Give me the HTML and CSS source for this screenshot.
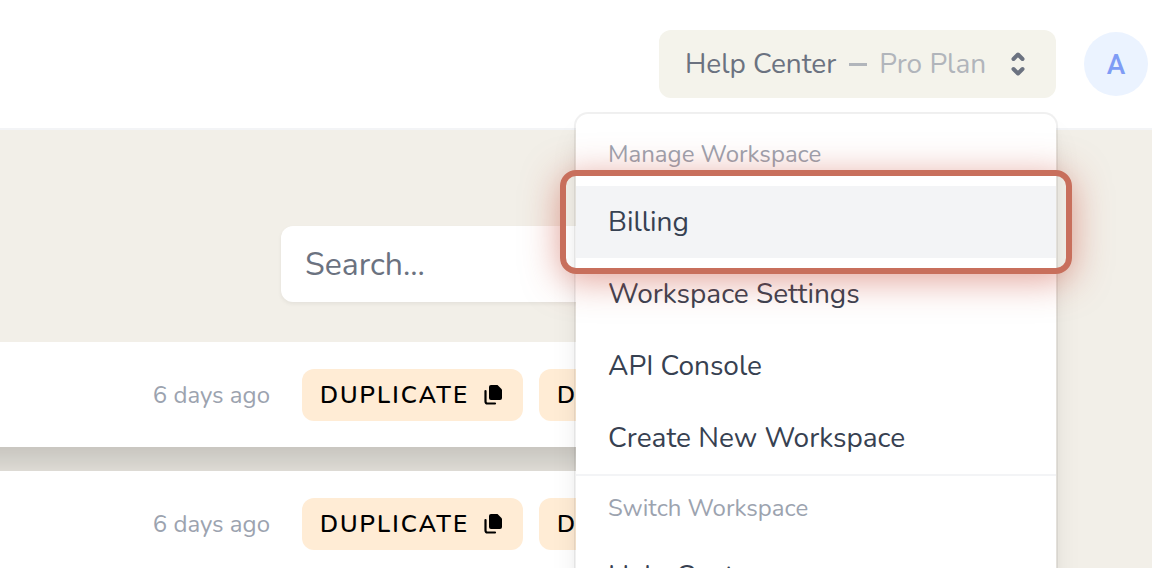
FILE: index.html
```
<!DOCTYPE html>
<html lang="en">
<head>
  <meta charset="UTF-8" />
  <meta name="viewport" content="width=device-width, initial-scale=1.0" />
  <title>Help Center</title>
  <link rel="stylesheet" href="styles.css">
</head>
<body>
  <svg class="sprite" aria-hidden="true">
    <symbol id="icon-copy" viewBox="0 0 20 22">
      <path d="M8 1h6.500l4.500 4.500V14a2 2 0 0 1-2 2H8a2 2 0 0 1-2-2V3a2 2 0 0 1 2-2z" fill="currentColor" />
      <path d="M2.500 7v10.500a2 2 0 0 0 2 2H12" fill="none" stroke="currentColor" stroke-width="2.200" stroke-linecap="round" />
    </symbol>
  </svg>

  <header class="topbar">
    <div class="switcher">
      <button class="switcher-btn" type="button" aria-haspopup="true" aria-expanded="true">
        <span>Help Center</span>
        <span class="dash"></span>
        <span class="plan">Pro Plan</span>
        <svg class="chevrons" viewBox="0 0 16 24" aria-hidden="true">
          <path d="M3.500 7L8 2.500 12.500 7M3.500 17L8 21.500 12.500 17" />
        </svg>
      </button>

      <nav class="menu">
        <div class="menu-label">Manage Workspace</div>
        <a class="menu-item active" href="#billing">Billing</a>
        <a class="menu-item" href="#settings">Workspace Settings</a>
        <a class="menu-item" href="#api">API Console</a>
        <a class="menu-item" href="#new">Create New Workspace</a>
        <hr class="menu-line">
        <div class="menu-label">Switch Workspace</div>
        <a class="menu-item" href="#help-center">Help Center</a>
      </nav>
    </div>
    <button class="avatar" type="button">A</button>
  </header>

  <main class="content">
    <input class="search" type="search" placeholder="Search..." aria-label="Search">

    <div class="cards">
      <article class="card raised">
        <span class="date">6 days ago</span>
        <button class="btn" type="button">Duplicate <svg class="icon"><use href="#icon-copy" /></svg></button>
        <button class="btn btn-delete" type="button">Delete</button>
      </article>
      <article class="card">
        <span class="date">6 days ago</span>
        <button class="btn" type="button">Duplicate <svg class="icon"><use href="#icon-copy" /></svg></button>
        <button class="btn btn-delete" type="button">Delete</button>
      </article>
    </div>
  </main>
</body>
</html>
```

FILE: styles.css
```
* {
  box-sizing: border-box;
}

body {
  margin: 0;
  min-height: 100vh;
  background: #f2efe8;
  font-family: Nunito, Lato, sans-serif;
  font-size: 28px;
  color: #374151;
  overflow: hidden;
}

button,
input {
  font-family: inherit;
}

.sprite {
  display: none;
}

/* top bar */
.topbar {
  display: flex;
  justify-content: flex-end;
  align-items: center;
  gap: 28px;
  height: 130px;
  padding: 0 4px 0 24px;
  background: #ffffff;
  border-bottom: 2px solid #f3f4f6;
}

.switcher {
  position: relative;
}

.switcher-btn {
  display: flex;
  align-items: center;
  min-width: 397px;
  height: 68px;
  padding: 0 30px 0 26px;
  border: none;
  border-radius: 12px;
  background: #f4f3eb;
  color: #6b7280;
  font-size: 28px;
  cursor: pointer;
}

.dash {
  width: 18px;
  height: 3px;
  margin: 0 12px 0 13px;
  background: #b1b5bb;
}

.plan {
  color: #b1b5bb;
}

.chevrons {
  width: 16px;
  height: 24px;
  margin-left: auto;
  fill: none;
  stroke: #6b7280;
  stroke-width: 4;
  stroke-linecap: round;
  stroke-linejoin: round;
}

.avatar {
  width: 64px;
  height: 64px;
  padding: 0;
  border: none;
  border-radius: 50%;
  background: #ebf3ff;
  color: #7f9cf5;
  font-family: Roboto, sans-serif;
  font-size: 28px;
  font-weight: 500;
  cursor: pointer;
}

/* workspace menu */
.menu {
  position: absolute;
  top: 82px;
  right: -2px;
  z-index: 10;
  width: 484px;
  padding: 8px 0;
  background: #ffffff;
  background-clip: padding-box;
  border: 2px solid rgba(0, 0, 0, 0.06);
  border-radius: 14px;
  box-shadow: 0 20px 30px -6px rgba(0, 0, 0, 0.1), 0 8px 12px -4px rgba(0, 0, 0, 0.05);
}

.menu-label,
.menu-item {
  display: flex;
  align-items: center;
  padding: 0 32px;
}

.menu-label {
  height: 64px;
  color: #9ca3af;
  font-size: 24px;
}

.menu-item {
  height: 72px;
  color: #374151;
  text-decoration: none;
}

.menu-item.active {
  position: relative;
  background: #f3f4f6;
}

.menu-item.active::after {
  content: "";
  position: absolute;
  inset: -16px;
  border: 6px solid #c86f5c;
  border-radius: 16px;
  box-shadow: 0 6px 36px rgba(200, 70, 50, 0.5);
  pointer-events: none;
}

.menu-line {
  height: 2px;
  margin: 0;
  border: none;
  background: #f3f4f6;
}

/* content */
.content {
  display: flex;
  flex-direction: column;
  align-items: flex-end;
  padding: 96px 407px 0 0;
}

.search {
  width: 464px;
  height: 76px;
  padding: 0 24px;
  border: none;
  border-radius: 12px;
  background: #ffffff;
  box-shadow: 0 2px 4px rgba(0, 0, 0, 0.06);
  color: #374151;
  font-size: 32px;
}

.search::placeholder {
  color: #6b7280;
}

/* cards bleed past the left edge */
.cards {
  display: flex;
  flex-direction: column;
  align-self: stretch;
  gap: 24px;
  margin: 40px 0 0 -80px;
}

.card {
  display: flex;
  justify-content: flex-end;
  align-items: center;
  gap: 16px;
  height: 105px;
  padding: 0 26px;
  background: #ffffff;
}

.card.raised {
  box-shadow: 0 30px 40px -10px rgba(0, 0, 0, 0.2);
}

.card + .card {
  position: relative;
}

.date {
  margin-right: 16px;
  color: #9ca3af;
  font-size: 24px;
}

.btn {
  display: flex;
  justify-content: space-between;
  align-items: center;
  width: 221px;
  height: 52px;
  padding: 0 20px 0 18px;
  border: none;
  border-radius: 12px;
  background: #ffecd5;
  color: #000000;
  font-size: 24px;
  font-weight: 600;
  letter-spacing: 2px;
  text-transform: uppercase;
  cursor: pointer;
}

.btn-delete {
  width: 180px;
}

.icon {
  width: 20px;
  height: 22px;
}
```
